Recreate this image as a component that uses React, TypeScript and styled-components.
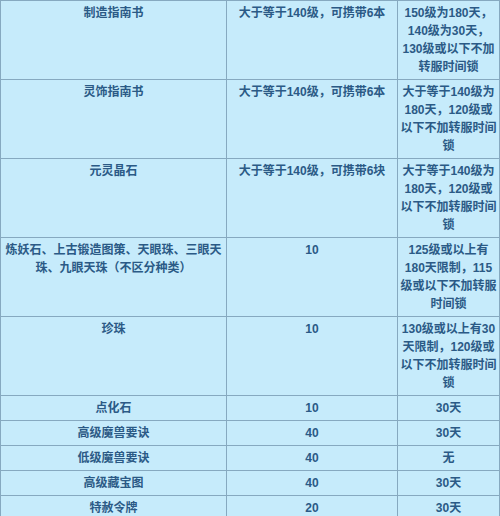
import React from "react";
import styled, { createGlobalStyle } from "styled-components";

const GlobalStyle = createGlobalStyle`
  html, body {
    margin: 0;
    padding: 0;
    background: #ffffff;
  }
`;

type Row = {
  name: string;
  limit: string;
  lock: string;
};

const rows: Row[] = [
  {
    name: "制造指南书",
    limit: "大于等于140级，可携带6本",
    lock: "150级为180天，140级为30天，130级或以下不加转服时间锁",
  },
  {
    name: "灵饰指南书",
    limit: "大于等于140级，可携带6本",
    lock: "大于等于140级为180天，120级或以下不加转服时间锁",
  },
  {
    name: "元灵晶石",
    limit: "大于等于140级，可携带6块",
    lock: "大于等于140级为180天，120级或以下不加转服时间锁",
  },
  {
    name: "炼妖石、上古锻造图策、天眼珠、三眼天珠、九眼天珠（不区分种类）",
    limit: "10",
    lock: "125级或以上有180天限制，115级或以下不加转服时间锁",
  },
  {
    name: "珍珠",
    limit: "10",
    lock: "130级或以上有30天限制，120级或以下不加转服时间锁",
  },
  { name: "点化石", limit: "10", lock: "30天" },
  { name: "高级魔兽要诀", limit: "40", lock: "30天" },
  { name: "低级魔兽要诀", limit: "40", lock: "无" },
  { name: "高级藏宝图", limit: "40", lock: "30天" },
  { name: "特赦令牌", limit: "20", lock: "30天" },
];

const App = () => {
  return (
    <>
      <GlobalStyle />
      <ItemTable>
        <colgroup>
          <Col $w={226} />
          <Col $w={171} />
          <Col $w={102} />
        </colgroup>
        <tbody>
          {rows.map((r) => (
            <tr key={r.name}>
              <Cell>{r.name}</Cell>
              <Cell>{r.limit}</Cell>
              <Cell>{r.lock}</Cell>
            </tr>
          ))}
        </tbody>
      </ItemTable>
    </>
  );
};

const ItemTable = styled.table`
  width: 499px;
  table-layout: fixed;
  border-collapse: collapse;
  background-color: #c6ebfb;
  font-family: "Liberation Sans", "Noto Sans CJK SC", sans-serif;
  font-size: 12px;
  font-weight: bold;
  line-height: 18px;
  color: #2b5a86;
`;

const Col = styled.col<{ $w: number }>`
  width: ${(p) => p.$w}px;
`;

const Cell = styled.td`
  border: 1px solid #86a9c0;
  padding: 3px 1px;
  text-align: center;
  vertical-align: top;
  word-break: normal;
`;

export default App;
